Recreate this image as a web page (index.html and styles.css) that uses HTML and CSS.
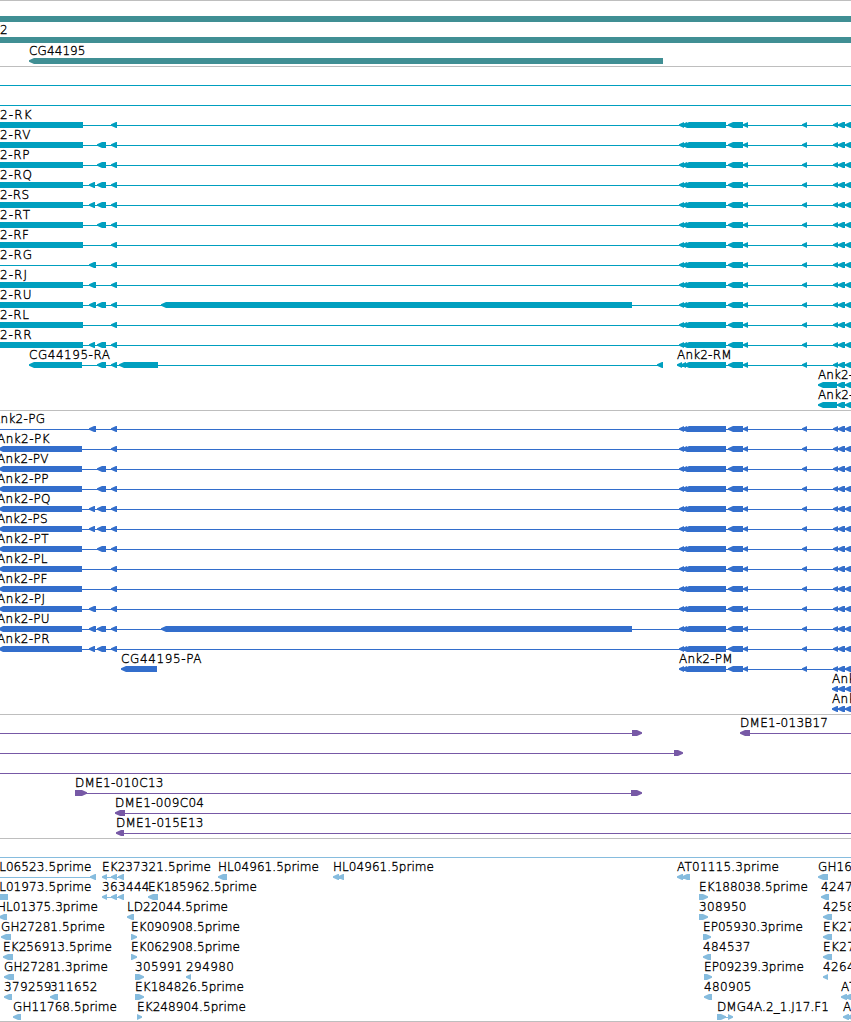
FILE: index.html
```html
<!DOCTYPE html>
<html lang="en">
<head>
<meta charset="utf-8">
<title>Ank2 region</title>
<link rel="stylesheet" href="styles.css">
</head>
<body>
<main class="browser" id="browser"></main>
<script src="tracks.js"></script>
</body>
</html>
```

FILE: styles.css
```css
body {
  margin: 0;
  background: #fff;
}

.browser {
  display: flex;
  flex-direction: column;
  width: 851px;
  height: 1022px;
  overflow: hidden;
}

.track {
  display: flex;
  flex-direction: column;
  flex: none;
  border-top: 1px solid #bebebe;
  padding: 2px 0 1px;
}

.track:last-child {
  border-bottom: 1px solid #bebebe;
}

.track.genes,
.track.ests {
  padding-bottom: 0;
}

.row {
  display: block;
  flex: none;
  width: 851px;
  height: 20px;
  overflow: visible;
}

.genes .row {
  height: 21px;
}

.label {
  font-family: "DejaVu Sans", sans-serif;
  font-size: 12px;
  font-weight: 200;
  fill: #000;
  stroke: #000;
  stroke-width: 0.35px;
}

.genes { color: #408f94; }
.transcripts { color: #009fbf; }
.proteins { color: #336ecc; }
.clones { color: #7759a6; }
.ests { color: #86bcde; }

.shape {
  fill: currentColor;
}
```

FILE: tracks.js
```js
// Feature kinds: "-" intron line, "=" plain block, "<" and ">" stranded blocks.
// Labels: [text, start, width].
const END = 851;
const line = ["-", 0, END];
const ank2 = [["<", 679, 684], ["<", 682, 687], ["<", 684, 726], ["<", 728, 743], ["<", 743, 748],
  ["<", 802, 807], ["<", 833, 838], ["<", 838, 845], ["<", 845, 852]];
const exons = {
  a: ["<", 89, 95], A: ["<", 89, 96], B: ["<", 97, 106], C: ["<", 111, 117], U: ["<", 161, 632]
};

const isoform = (label, block, codes) => ({
  labels: [label],
  items: [line, ...(block ? [block] : []), ...[...codes].map(c => exons[c]), ...ank2]
});

const rna = (name, codes, w, coding = true) =>
  isoform(["2-R" + name, 0, w - 0.5], coding && ["=", 0, 83], codes);
const protein = (name, codes, w) =>
  isoform(["Ank2-P" + name, -3, w + 0.5], ["<", -2, 82], codes);
const row = (labels, ...items) => ({ labels, items });

const tracks = {
  genes: [
    row([], ["=", 0, END]),
    row([["2", 0, 7.6]], ["=", 0, END]),
    row([["CG44195", 29, 56.5]], ["<", 29, 663])
  ],
  transcripts: [
    row([], line),
    row([], line),
    rna("K", "C", 32), rna("V", "BC", 31), rna("P", "BC", 30), rna("Q", "aBC", 32.5),
    rna("S", "aBC", 29.5), rna("T", "BC", 30.5), rna("F", "C", 29.5), rna("G", "AC", 32.5, false),
    rna("J", "AC", 27.5), rna("U", "ABCU", 32), rna("L", "C", 29.5), rna("R", "aBC", 32),
    row([["CG44195-RA", 29, 81], ["Ank2-RM", 677, 54.5]],
      ["-", 82, 660], ["<", 29, 82], exons.B, exons.C, ["<", 119, 158], ["<", 657, 663],
      ["-", 680, END], ["<", 677, 682], ["<", 681, 686], ["<", 684, 726], ...ank2.slice(3)),
    row([["Ank2-RO", 818, 53]], ["<", 818, 837], ["<", 837, 845], ["<", 845, 852]),
    row([["Ank2-RN", 818, 53]], ["<", 818, 837], ["<", 837, 845], ["<", 845, 852])
  ],
  proteins: [
    isoform(["Ank2-PG", -8, 53], null, "AC"),
    protein("K", "C", 52), protein("V", "BC", 51), protein("P", "BC", 51), protein("Q", "aBC", 53),
    protein("S", "aBC", 50), protein("T", "BC", 51), protein("L", "C", 50), protein("F", "C", 50),
    protein("J", "AC", 47.5), protein("U", "ABCU", 52), protein("R", "aBC", 52),
    row([["CG44195-PA", 121, 80.5], ["Ank2-PM", 679, 53.5]],
      ["<", 121, 157], ["-", 681, END], ...ank2),
    row([["Ank2-PO", 832, 53]], ["<", 832, 838], ["<", 838, 845], ["<", 845, 852]),
    row([["Ank2-PN", 832, 53]], ["<", 832, 838], ["<", 838, 845], ["<", 845, 852])
  ],
  clones: [
    row([["DME1-013B17", 740, 88]], ["-", 0, 633], [">", 632, 642], ["-", 749, END], ["<", 740, 750]),
    row([], ["-", 0, 675], [">", 674, 683]),
    row([], line),
    row([["DME1-010C13", 75, 88.5]], ["-", 80, 633], [">", 75, 87], [">", 631, 642]),
    row([["DME1-009C04", 115, 89]], ["-", 122, END], ["<", 115, 125]),
    row([["DME1-015E13", 116, 87.5]], ["-", 122, END], ["<", 116, 124])
  ],
  ests: [
    row([], line),
    row([["HL06523.5prime", -10, 101.5], ["EK237321.5prime", 102, 109], ["HL04961.5prime", 218, 101],
      ["HL04961.5prime", 333, 101], ["AT01115.3prime", 677, 102], ["GH16", 818, 34]],
      ["-", 0, 91], ["<", 90, 96], ["-", 105, 120], ["<", 102, 107], ["<", 111, 117], ["<", 118, 124],
      ["<", 218, 227], ["<", 333, 339], ["<", 338, 344], ["<", 677, 683], ["<", 682, 690], ["<", 818, 828]),
    row([["HL01973.5prime", -10, 101.5], ["363444", 102, 47.5], ["EK185962.5prime", 148, 109],
      ["EK188038.5prime", 699, 109], ["424744", 821, 47.5]],
      ["=", 0, 8], ["-", 105, 120], ["<", 102, 107], ["<", 111, 117], ["<", 118, 124],
      ["<", 148, 158], [">", 699, 708], ["<", 821, 829]),
    row([["HL01375.3prime", -3, 101], ["LD22044.5prime", 127, 101], ["308950", 699, 47.5], ["425844", 823, 47.5]],
      ["<", -1, 7], ["<", 127, 134], [">", 699, 708], ["<", 823, 832]),
    row([["GH27281.5prime", 1, 104], ["EK090908.5prime", 131, 109], ["EP05930.3prime", 703, 100], ["EK27", 823, 32]],
      ["<", 1, 11], [">", 131, 137], [">", 703, 711], ["<", 823, 832]),
    row([["EK256913.5prime", 3, 109], ["EK062908.5prime", 131, 109], ["484537", 703, 47.5], ["EK27", 823, 32]],
      ["<", 3, 13], [">", 131, 137], ["<", 703, 711], ["<", 823, 832]),
    row([["GH27281.3prime", 4, 104], ["305991", 135, 47.5], ["294980", 186, 48], ["EP09239.3prime", 704, 100], ["426444", 823, 47.5]],
      ["<", 4, 14], [">", 135, 144], ["<", 186, 191], [">", 704, 712], ["<", 823, 828]),
    row([["379259", 4, 47.5], ["311652", 50, 47.5], ["EK184826.5prime", 135, 109], ["480905", 704, 47.5], ["AT", 841, 15.5]],
      ["<", 4, 12], ["<", 50, 58], [">", 135, 144], ["<", 704, 712], ["<", 841, 847], ["<", 845, 852]),
    row([["GH11768.5prime", 13, 104], ["EK248904.5prime", 137, 109], ["DMG4A.2_1.J17.F1", 717, 112], ["A", 843, 8.2]],
      ["<", 13, 21], [">", 137, 142], ["-", 724, 730], [">", 717, 726], [">", 728, 733], ["<", 843, 849], ["<", 847, 853])
  ]
};

// Every outline runs clockwise so that overlapping parts merge.
function shapePath([kind, x1, x2]) {
  const tip = Math.min(5, x2 - x1);
  if (kind === "-") return `M${x1} 16H${x2}V17H${x1}Z`;
  if (kind === "=") return `M${x1} 13H${x2}V19H${x1}Z`;
  if (kind === "<") return `M${x1} 16.7V15.3L${x1 + tip} 13H${x2}V19H${x1 + tip}Z`;
  return `M${x1} 13H${x2 - tip}L${x2} 15.3V16.7L${x2 - tip} 19H${x1}Z`;
}

document.getElementById("browser").innerHTML = Object.entries(tracks).map(([name, rows]) =>
  `<section class="track ${name}">` + rows.map(r =>
    `<svg class="row"><path class="shape" d="${r.items.map(shapePath).join("")}"/>` +
    r.labels.map(([text, x, w]) =>
      `<text class="label" x="${x}" y="10" textLength="${w}">${text}</text>`).join("") +
    `</svg>`).join("") + `</section>`).join("");
```
